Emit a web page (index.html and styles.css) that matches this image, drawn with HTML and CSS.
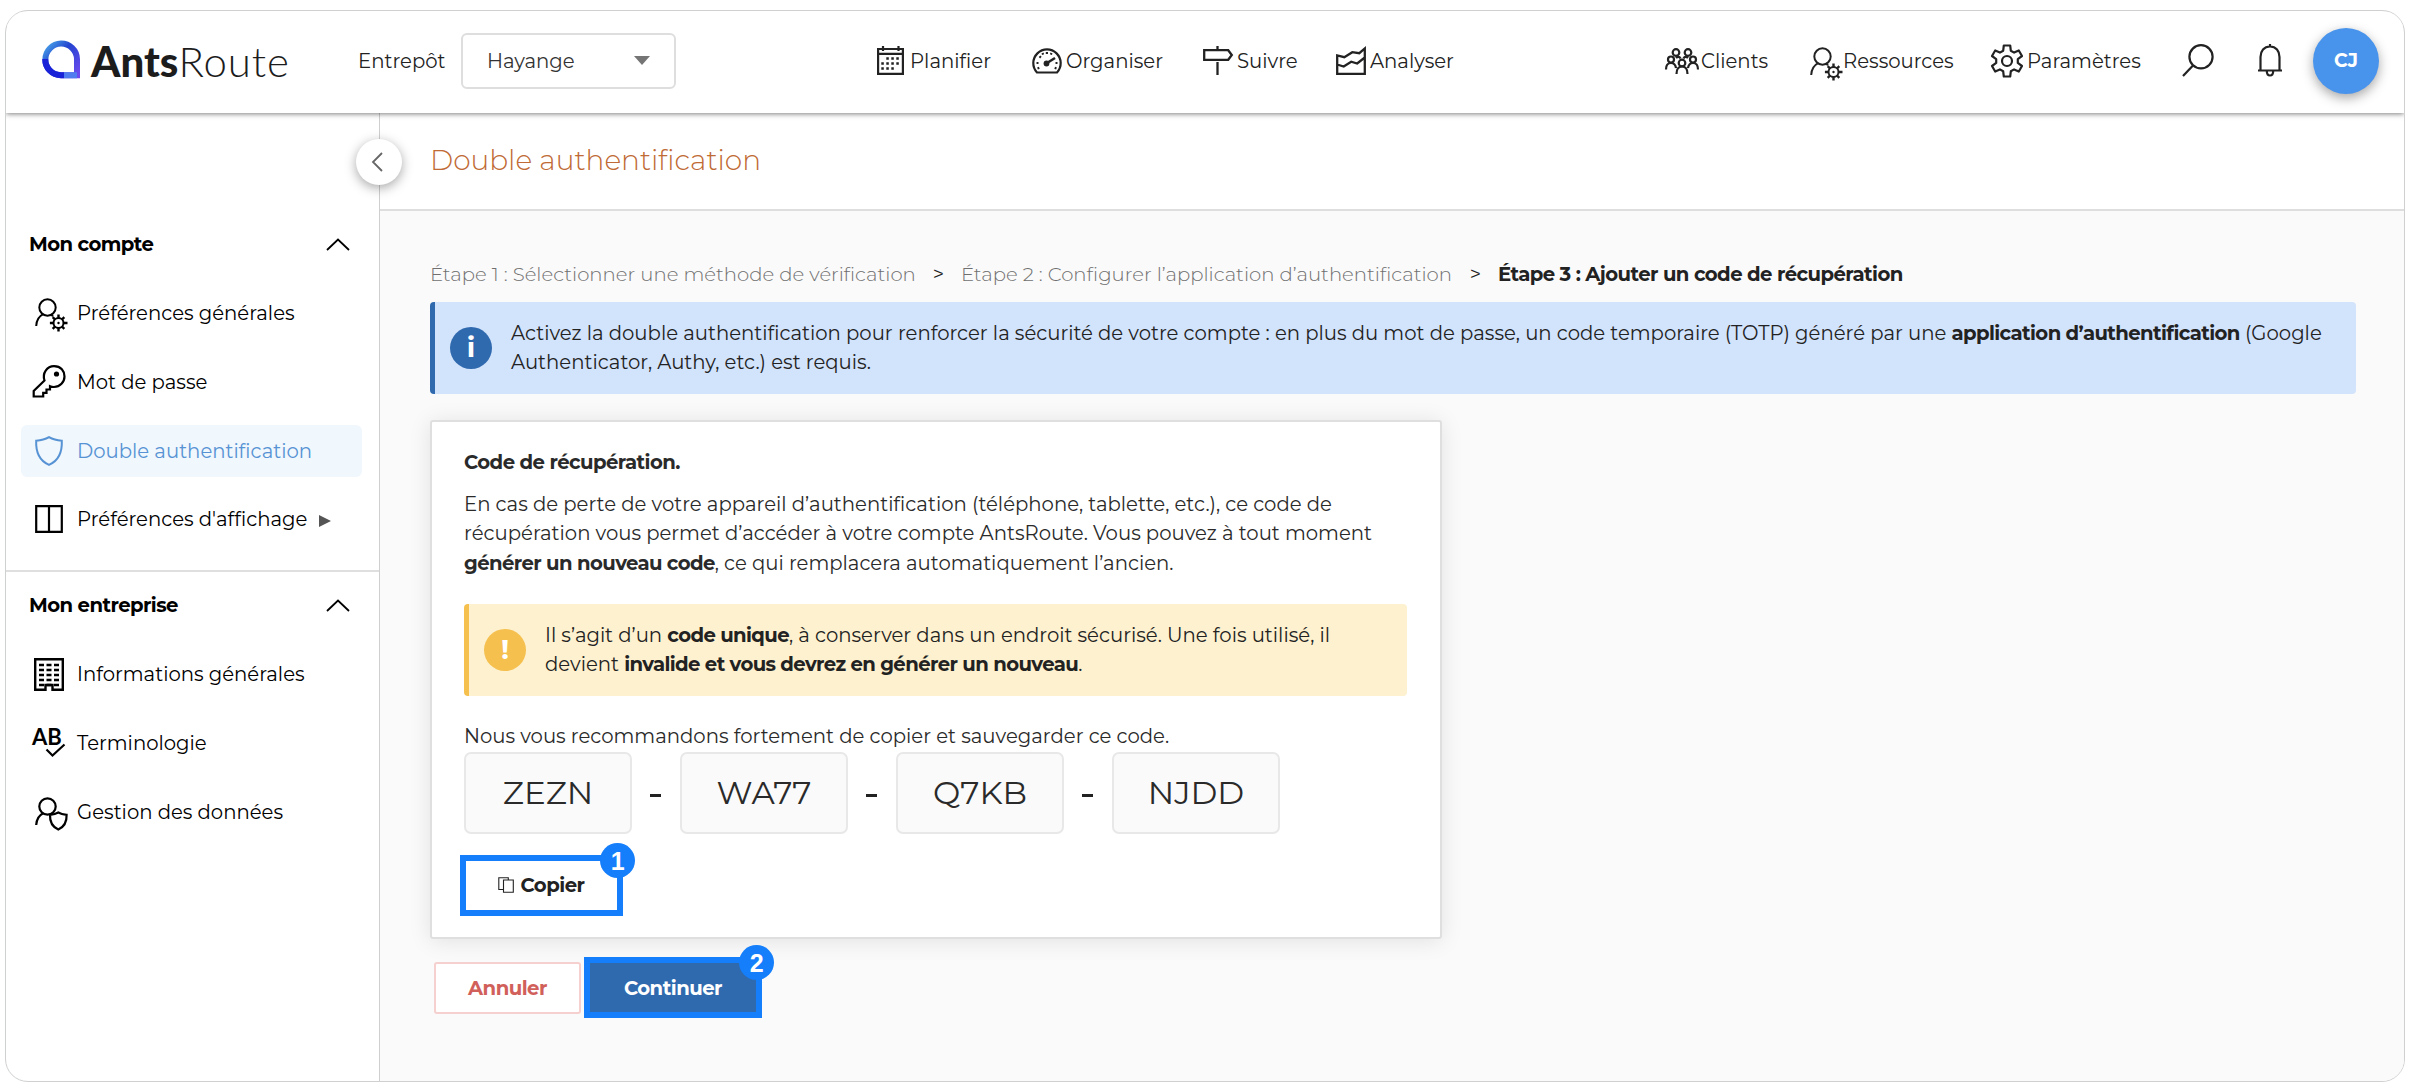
FILE: index.html
```
<!DOCTYPE html>
<html lang="fr">
<head>
    <meta charset="UTF-8">
    <meta name="viewport" content="width=device-width, initial-scale=1.0">
    <title>AntsRoute - Double authentification</title>
    <link rel="stylesheet" href="styles.css">
</head>
<body>

<!-- icones reutilisees -->
<svg class="sprite" aria-hidden="true">
    <symbol id="user-gear" viewBox="0 0 33 34">
        <g fill="none" stroke="currentColor" stroke-width="2">
            <circle cx="12.5" cy="9.5" r="8.2"/>
            <path d="M1.2 28c.3-5.5 2.8-9.7 7-11.8M16 16.5l2 1.8"/>
            <circle cx="23.5" cy="25" r="5"/>
            <path d="M23.5 20v-3.6M23.5 30v3.6M18.5 25h-3.6M28.5 25h4M20 21.5l-2.3-2.3M27 28.5l2.3 2.3M20 28.5l-2.3 2.3M27 21.5l2.3-2.3" stroke-width="2.4"/>
        </g>
        <circle cx="23.5" cy="25" r="1.2" fill="currentColor"/>
    </symbol>
    <symbol id="chevron" viewBox="0 0 24 13">
        <path d="M1 12L12 1.5 23 12" fill="none" stroke="currentColor" stroke-width="1.8"/>
    </symbol>
</svg>

<div class="app">
    <header class="topbar">
        <div class="logo">
            <svg class="logo-icon" viewBox="0 0 38 38">
                <defs>
                    <linearGradient id="g1" x1="0" y1="0" x2="1" y2="1">
                        <stop offset="0" stop-color="#4aa8ea"/>
                        <stop offset=".4" stop-color="#2344cf"/>
                        <stop offset="1" stop-color="#6b4bf0"/>
                    </linearGradient>
                </defs>
                <path d="M35 35.2H19A15.8 15.8 0 1 1 35 19z" fill="none" stroke="url(#g1)" stroke-width="6"/>
                <path d="M3.2 19A15.8 15.8 0 0 0 19 35.2h3" fill="none" stroke="#1a22d8" stroke-width="6"/>
                <path d="M22 35.2h13" fill="none" stroke="#4f7df0" stroke-width="6"/>
            </svg>
            <span class="logo-text"><b>Ants</b>Route</span>
        </div>

        <span class="depot-label">Entrepôt</span>
        <div class="select"><span>Hayange</span><i class="caret"></i></div>

        <nav class="menu">
            <a class="menu-item planifier">
                <svg width="27" height="29" viewBox="0 0 27 29"><g fill="none" stroke="currentColor" stroke-width="2.2"><path d="M1.1 3h24.8v24.8H1.1zM1 7.8h25M6 0v5M21.5 0v5"/><path d="M9.3 12.5h13M4.3 17.5h18M4.3 22.5h13" stroke-width="2.5" stroke-dasharray="2.5 2.5"/></g></svg>
                <span>Planifier</span>
            </a>
            <a class="menu-item organiser">
                <svg width="30" height="27" viewBox="0 0 30 27"><g fill="none" stroke="currentColor" stroke-width="2.2"><path d="M5 25.5A13.7 13.7 0 1 1 25 25.5z"/><path d="M15 16l8-5" stroke-width="2.6"/><path d="M4.5 16h2M23.5 16h2M7.5 9.3l1.4 1.3M14.9 5v2M10.5 6l.6 1.6M19.5 6l-.6 1.6M5.5 21.5l1.8-.7M24.5 21.5l-1.8-.7"/></g><circle cx="14.5" cy="16.5" r="2.9" fill="currentColor"/></svg>
                <span>Organiser</span>
            </a>
            <a class="menu-item suivre">
                <svg width="30" height="29" viewBox="0 0 30 29"><path d="M1.2 4.2h24l3.6 4.8-3.6 4.8h-24zM14.5 0v4M14.5 16v13" fill="none" stroke="currentColor" stroke-width="2.3"/></svg>
                <span>Suivre</span>
            </a>
            <a class="menu-item analyser">
                <svg width="30" height="29" viewBox="0 0 30 29"><path d="M1.2 9.5v18.3h27.6V2.5l-5.5 4.7-7-1-8 5zM1.2 18.5l6.5 2 7.5-4.8 6 1.8 7.6-6" fill="none" stroke="currentColor" stroke-width="2.3"/></svg>
                <span>Analyser</span>
            </a>
        </nav>

        <nav class="menu menu-right">
            <a class="menu-item clients">
                <svg width="34" height="26" viewBox="0 0 34 26"><g fill="none" stroke="currentColor" stroke-width="2.2"><circle cx="11" cy="4.5" r="3.3"/><circle cx="23" cy="4.5" r="3.3"/><circle cx="6" cy="11.5" r="3"/><circle cx="28" cy="11.5" r="3"/><circle cx="17" cy="15" r="3.3"/><path d="M1 21.5c0-4 2-6.5 5-6.5s4.5 2 5 5M33 21.5c0-4-2-6.5-5-6.5s-4.5 2-5 5M11.5 26c0-5 2-7.5 5.5-7.5s5.5 2.5 5.5 7.5M11 10c1.5-1.5 3.5-1.5 4.5.5M23 10c-1.5-1.5-3.5-1.5-4.5.5"/></g></svg>
                <span>Clients</span>
            </a>
            <a class="menu-item ressources">
                <svg width="33" height="34"><use href="#user-gear"/></svg>
                <span>Ressources</span>
            </a>
            <a class="menu-item parametres">
                <svg width="32" height="34" viewBox="0 0 32 34"><g fill="none" stroke="currentColor" stroke-width="2.2" stroke-linejoin="round"><path d="M12.8 1.5h6.4l.6 5.2 3.3 1.9 4.7-2.1L31 12l-4.2 3.1v3.8L31 22l-3.2 5.5-4.7-2.1-3.3 1.9-.6 5.2h-6.4l-.6-5.2-3.3-1.9-4.7 2.1L1 22l4.2-3.1v-3.8L1 12l3.2-5.5 4.7 2.1 3.3-1.9z"/><circle cx="16" cy="17" r="5"/></g></svg>
                <span>Paramètres</span>
            </a>
        </nav>

        <svg class="search" width="32" height="33" viewBox="0 0 32 33"><g fill="none" stroke="currentColor" stroke-width="2.2"><circle cx="19" cy="12.8" r="11.6"/><path d="M11 21.5L1 32"/></g></svg>
        <svg class="bell" width="26" height="33" viewBox="0 0 26 33"><path d="M1 26.5h24M3.5 26V13c0-6 3.5-10.5 9.5-10.5S22.5 7 22.5 13v13M13 0v3M9.8 27c0 2.5 1.2 4.5 3.2 4.5s3.2-2 3.2-4.5" fill="none" stroke="currentColor" stroke-width="2.2"/></svg>
        <div class="avatar">CJ</div>
    </header>

    <div class="layout">
        <aside class="sidebar">
            <button class="collapse"><svg width="12" height="20" viewBox="0 0 12 20"><path d="M11 1L2 10l9 9" fill="none" stroke="currentColor" stroke-width="1.8"/></svg></button>

            <section class="group">
                <h2 class="group-title"><span>Mon compte</span><svg width="24" height="13"><use href="#chevron"/></svg></h2>
                <ul>
                    <li class="item shifted"><svg width="33" height="34" viewBox="0 0 33 34"><use href="#user-gear" width="33" height="34"/></svg><span>Préférences générales</span></li>
                    <li class="item"><svg width="33" height="33" viewBox="0 0 33 33"><path d="M12 15.5C9.5 8 14.5 1.2 21.5 1.2S32 6 32 11.5 27.5 22 21.5 22c-1.5 0-3-.3-4-.8v3.3h-3.5v3.3h-3.3V31.5H1.2V26z" fill="none" stroke="currentColor" stroke-width="2.2"/><circle cx="24" cy="9" r="2.6" fill="currentColor"/></svg><span>Mot de passe</span></li>
                    <li class="item active"><svg width="28" height="30" viewBox="0 0 28 30"><path d="M14 1.2c4 2.4 8.5 3.3 12.8 3.5C27.3 16 24 24.5 14 28.8 4 24.5.7 16 1.2 4.7 5.5 4.5 10 3.6 14 1.2z" fill="none" stroke="currentColor" stroke-width="2"/></svg><span>Double authentification</span></li>
                    <li class="item"><svg width="28" height="28" viewBox="0 0 28 28"><path d="M1.2 1.2h25.6v25.6H1.2zM14 1v26" fill="none" stroke="currentColor" stroke-width="2.2"/></svg><span>Préférences d'affichage</span><i class="arrow"></i></li>
                </ul>
            </section>

            <section class="group second">
                <h2 class="group-title"><span>Mon entreprise</span><svg width="24" height="13"><use href="#chevron"/></svg></h2>
                <ul>
                    <li class="item"><svg width="30" height="33" viewBox="0 0 30 33"><g fill="none" stroke="currentColor" stroke-width="2.4"><path d="M1.2 1.2h27.6v30.6H18.5V27h-7v4.8H1.2z"/><path d="M5 7h20M5 12h20M5 17h20M5 22h20M5 27h20" stroke-dasharray="5 2.5"/></g></svg><span>Informations générales</span></li>
                    <li class="item"><svg width="33" height="29" viewBox="0 0 33 29"><text x="-0.5" y="17" class="ab">AB</text><path d="M14 21.5l6 6L32 16.5" fill="none" stroke="currentColor" stroke-width="2.2"/></svg><span>Terminologie</span></li>
                    <li class="item shifted"><svg width="33" height="34" viewBox="0 0 33 34"><g fill="none" stroke="currentColor" stroke-width="2.2"><circle cx="12.5" cy="9.5" r="8.2"/><path d="M1.2 28c.3-5.5 2.8-9.7 7-11.8M23.3 15.5c2.5 1.5 5 2 8.3 2.3.3 7.5-2 12-8.3 14.7-6.3-2.7-8.6-7.2-8.3-14.7 3.3-.3 5.8-.8 8.3-2.3z"/></g></svg><span>Gestion des données</span></li>
                </ul>
            </section>
        </aside>

        <main class="content">
            <div class="page-head"><h1>Double authentification</h1></div>

            <div class="page-body">
                <ol class="steps">
                    <li class="step1">Étape 1 : Sélectionner une méthode de vérification</li>
                    <li class="sep">&gt;</li>
                    <li class="step2">Étape 2 : Configurer l’application d’authentification</li>
                    <li class="sep">&gt;</li>
                    <li class="step3">Étape 3 : Ajouter un code de récupération</li>
                </ol>

                <div class="alert alert-info">
                    <div class="alert-icon">i</div>
                    <p>Activez la double authentification pour renforcer la sécurité de votre compte : en plus du mot de passe, un code temporaire (TOTP) généré par une <b>application d’authentification</b> (Google<br>Authenticator, Authy, etc.) est requis.</p>
                </div>

                <div class="card">
                    <h3>Code de récupération.</h3>
                    <p>En cas de perte de votre appareil d’authentification (téléphone, tablette, etc.), ce code de<br>récupération vous permet d’accéder à votre compte AntsRoute. Vous pouvez à tout moment<br><b>générer un nouveau code</b>, ce qui remplacera automatiquement l’ancien.</p>

                    <div class="alert alert-warning">
                        <div class="alert-icon">!</div>
                        <p>Il s’agit d’un <b>code unique</b>, à conserver dans un endroit sécurisé. Une fois utilisé, il<br>devient <b>invalide et vous devrez en générer un nouveau</b>.</p>
                    </div>

                    <p>Nous vous recommandons fortement de copier et sauvegarder ce code.</p>
                    <div class="codes">
                        <span class="code">ZEZN</span><i class="dash"></i>
                        <span class="code">WA77</span><i class="dash"></i>
                        <span class="code">Q7KB</span><i class="dash"></i>
                        <span class="code">NJDD</span>
                    </div>

                    <button class="btn btn-copy">
                        <svg width="16" height="16" viewBox="0 0 16 16"><path d="M5.5 3h9.8v12.3H5.5zM5.5 12.5H.8V.8h9.5V3" fill="none" stroke="currentColor" stroke-width="1.1"/></svg>
                        <span>Copier</span>
                        <em class="badge">1</em>
                    </button>
                </div>

                <div class="actions">
                    <button class="btn btn-cancel"><span>Annuler</span></button>
                    <button class="btn btn-next"><span>Continuer</span><em class="badge">2</em></button>
                </div>
            </div>
        </main>
    </div>
</div>

</body>
</html>
```
FILE: styles.css
```
*{
    margin: 0;
    padding: 0;
    box-sizing: border-box;
}

body{
    background-color: white;
    font-family: Montserrat, Inter, sans-serif;
    font-size: 19.65px;
    color: #2a2a2a;
    padding: 10px 5px 9px;
}

ul, ol{
    list-style: none;
}

svg{
    display: block;
    flex-shrink: 0;
    overflow: visible;
}

.sprite{
    position: absolute;
    width: 0;
    height: 0;
}

.app{
    height: 1072px;
    border: 1px solid #cfd0d0;
    border-radius: 23px;
    overflow: hidden;
    display: flex;
    flex-direction: column;
}

/* barre du haut */
.topbar{
    height: 102px;
    flex-shrink: 0;
    display: flex;
    align-items: center;
    padding: 0 25px 3px 36px;
    background-color: white;
    box-shadow: 0 1px 5px rgba(0,0,0,0.5);
    position: relative;
    z-index: 2;
    color: #222;
}

.logo{
    display: flex;
    align-items: center;
    width: 316px;
    color: #1c1c1c;
}

.logo-icon{
    width: 38px;
    height: 38px;
    margin-top: -4px;
}

.logo-text{
    font-family: Lato, sans-serif;
    font-size: 42px;
    font-weight: 300;
    line-height: 50px;
    letter-spacing: 0.9px;
    margin-left: 11px;
}

.logo-text b{
    font-weight: 900;
    letter-spacing: 0;
}

.depot-label{
    width: 103px;
}

.select{
    width: 215px;
    height: 56px;
    border: 2px solid #dedede;
    border-radius: 6px;
    display: flex;
    align-items: center;
    justify-content: space-between;
    padding: 0 24px;
    color: #333;
}

.caret{
    border: 8px solid transparent;
    border-top: 9px solid #757575;
    border-bottom: 0;
}

.menu{
    display: flex;
    margin-left: 201px;
}

.menu-item{
    display: flex;
    align-items: center;
    white-space: nowrap;
}

.menu-item span{
    margin-left: 4px;
}

.planifier{ width: 155px; }
.planifier span{ margin-left: 6px; }
.organiser{ width: 171px; }
.suivre{ width: 133px; }
.analyser{ width: 120px; }

.menu-right{
    margin-left: 209px;
}

.clients{ width: 145px; }
.clients span{ margin-left: 2px; }
.ressources{ width: 181px; }
.ressources svg{ margin-top: 6px; }
.ressources span{ margin-left: 0; }
.parametres{ width: 191px; }

.bell{
    margin-left: 43px;
}

.avatar{
    width: 66px;
    height: 66px;
    border-radius: 50%;
    margin-left: auto;
    background-color: #4893ec;
    color: white;
    font-weight: 700;
    font-size: 19px;
    display: flex;
    align-items: center;
    justify-content: center;
    box-shadow: 0 4px 12px rgba(0,0,0,0.35);
}

.layout{
    flex: 1;
    display: flex;
}

/* menu lateral */
.sidebar{
    width: 374px;
    flex-shrink: 0;
    border-right: 1px solid #cfcfcf;
    position: relative;
    color: black;
}

.collapse{
    position: absolute;
    top: 26px;
    right: -23px;
    width: 46px;
    height: 46px;
    border: 0;
    border-radius: 50%;
    background-color: white;
    color: #666;
    box-shadow: 0 3px 12px rgba(0,0,0,0.35);
    display: flex;
    align-items: center;
    justify-content: center;
    padding-right: 4px;
}

.group{
    padding: 111px 17px 0 15px;
    height: 457px;
}

.group.second{
    border-top: 2px solid #dfdfdf;
    padding-top: 13px;
}

.group-title{
    height: 40px;
    font-size: inherit;
    font-weight: 700;
    letter-spacing: -0.55px;
    display: flex;
    align-items: center;
    justify-content: space-between;
    padding: 0 12px 0 8px;
    margin-bottom: 23px;
}

.item{
    height: 52px;
    margin-bottom: 16.8px;
    border-radius: 6px;
    display: flex;
    align-items: center;
    white-space: nowrap;
}

.item svg{
    width: 56px;
}

.item.shifted svg{
    margin: 4px 0 0 5px;
    width: 51px;
}

.item.active{
    background-color: #f0f7fd;
    color: #5793d4;
}

.ab{
    font-family: Lato, sans-serif;
    font-size: 22px;
    font-weight: 700;
    fill: currentColor;
}

.arrow{
    border: 6px solid transparent;
    border-left: 12px solid #555;
    border-right: 0;
    margin: 4px 0 0 12px;
}

/* contenu */
.content{
    flex: 1;
    min-width: 0;
    background-color: #fafafa;
}

.page-head{
    height: 98px;
    background-color: white;
    border-bottom: 2px solid #dedede;
    padding: 0 0 2px 50px;
    display: flex;
    align-items: center;
}

h1{
    font-size: 28px;
    font-weight: 300;
    color: #c06a35;
}

.page-body{
    padding: 45px 48px 0 50px;
}

.steps{
    display: flex;
    height: 36px;
    line-height: 36px;
    margin-bottom: 10px;
    white-space: nowrap;
    font-weight: 300;
    color: #6f6f6f;
}

.sep{
    color: #222;
    font-weight: 400;
    width: 45px;
    text-align: center;
}

.step1{ width: 486px; }
.step2{ width: 492px; }

.step3{
    font-weight: 700;
    letter-spacing: -0.55px;
    color: #222;
}

.alert{
    height: 92px;
    border-radius: 4px;
    border-left: 5px solid;
    display: flex;
    align-items: center;
    line-height: 29.5px;
    white-space: nowrap;
}

.alert p{
    color: #222;
    margin-left: 19px;
}

.alert-icon{
    width: 42px;
    height: 42px;
    border-radius: 50%;
    margin-left: 15px;
    color: white;
    font-weight: 700;
    font-size: 28px;
    display: flex;
    align-items: center;
    justify-content: center;
}

.alert-info{
    background-color: #d2e3fc;
    border-color: #2f69ae;
}

.alert-info .alert-icon{
    background-color: #2f69ae;
}

.alert-warning{
    background-color: #fdf1cf;
    border-color: #f5c04e;
    margin: 26px 0;
}

.alert-warning .alert-icon{
    background-color: #f5c04e;
}

.card{
    width: 1012px;
    height: 519px;
    margin-top: 26px;
    padding: 26px 33px 0 32px;
    background-color: white;
    border: 2px solid #dfdfdf;
    border-radius: 3px;
    box-shadow: 0 2px 22px rgba(0,0,0,0.1);
    line-height: 29.5px;
    white-space: nowrap;
}

h3{
    font-size: inherit;
    font-weight: 700;
    letter-spacing: -0.55px;
    margin-bottom: 12px;
}

b{
    font-weight: 700;
    letter-spacing: -0.6px;
}

.codes{
    display: flex;
    align-items: center;
}

.code{
    width: 168px;
    height: 82px;
    border: 2px solid #e8e8e8;
    border-radius: 7px;
    background-color: #fafafa;
    font-size: 32.5px;
    display: flex;
    align-items: center;
    justify-content: center;
}

.dash{
    width: 11px;
    height: 3px;
    background-color: #222;
    margin: 5px 19px 0 18px;
}

.btn{
    font-family: inherit;
    font-size: 19.65px;
    font-weight: 700;
    letter-spacing: -0.5px;
    display: flex;
    align-items: center;
    justify-content: center;
    position: relative;
}

.badge{
    position: absolute;
    top: -18px;
    right: -18px;
    width: 35px;
    height: 35px;
    border-radius: 50%;
    background-color: #147efb;
    color: white;
    font-family: "Liberation Sans", Arial, sans-serif;
    font-style: normal;
    font-weight: 700;
    font-size: 25px;
    line-height: 36px;
    text-align: center;
}

.btn-copy{
    width: 163px;
    height: 61px;
    margin: 21px 0 0 -4px;
    border: 6px solid #147efb;
    background-color: white;
    color: #222;
    gap: 6px;
}

.actions{
    display: flex;
    align-items: center;
    margin-top: 18px;
    padding-left: 4px;
}

.btn-cancel{
    width: 147px;
    height: 52px;
    border: 2px solid #f6d0ce;
    border-radius: 3px;
    background-color: white;
    color: #d1605b;
}

.btn-next{
    width: 178px;
    height: 61px;
    margin-left: 3px;
    border: 6px solid #147efb;
    background-color: #2f69ae;
    color: white;
}
```
